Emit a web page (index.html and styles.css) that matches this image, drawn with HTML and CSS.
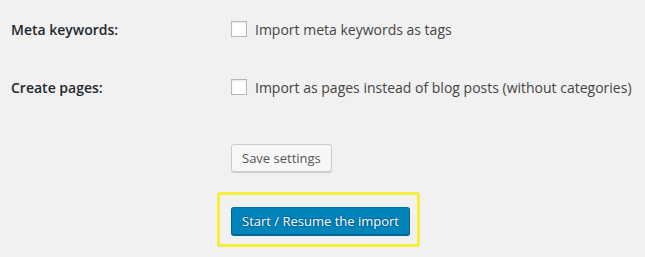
FILE: index.html
```html
<!DOCTYPE html>
<html lang="en">
<head>
  <meta charset="UTF-8">
  <title>Import settings</title>
  <link rel="stylesheet" href="styles.css">
</head>
<body>

<div class="settings">
  <div class="form-row">
    <div class="form-label">Meta keywords:</div>
    <label class="form-option">
      <input type="checkbox">
      <span>Import meta keywords as tags</span>
    </label>
  </div>

  <div class="form-row">
    <div class="form-label">Create pages:</div>
    <label class="form-option">
      <input type="checkbox">
      <span>Import as pages instead of blog posts (without categories)</span>
    </label>
  </div>

  <div class="actions">
    <button class="button">Save settings</button>

    <div class="highlight">
      <button class="button button-primary">Start / Resume the import</button>
    </div>
  </div>
</div>

</body>
</html>
```

FILE: styles.css
```css
/* Estilos gerais */
body {
  margin: 0;
  background-color: #f1f1f1;
  font-family: 'Open Sans', 'Liberation Sans', sans-serif;
  font-size: 14px;
  color: #444;
}

.settings {
  padding-left: 11px;
}

/* Linhas do formulário */
.form-row {
  display: flex;
  align-items: center;
  height: 58px;
}

.form-label {
  width: 220px;
  font-weight: 600;
  color: #23282d;
}

.form-option {
  display: flex;
  align-items: center;
  gap: 8px;
}

.form-option input[type="checkbox"] {
  appearance: none;
  -webkit-appearance: none;
  margin: 0;
  width: 16px;
  height: 16px;
  border: 1px solid #b4b9be;
  background-color: #fff;
  box-shadow: inset 0 1px 2px rgba(0, 0, 0, 0.1);
}

/* Botões */
.actions {
  padding-left: 220px;
  padding-top: 28px;
}

.button {
  display: block;
  height: 28px;
  padding: 0 10px 1px;
  font-family: inherit;
  font-size: 13px;
  line-height: 26px;
  color: #555;
  background-color: #f7f7f7;
  border: 1px solid #ccc;
  border-radius: 3px;
  box-shadow: 0 1px 0 #ccc;
  cursor: pointer;
}

.button-primary {
  color: #fff;
  background-color: #0085ba;
  border-color: #0073aa #006799 #006799;
  box-shadow: 0 1px 0 #006799;
  text-shadow: 0 -1px 1px #006799, 1px 0 1px #006799, 0 1px 1px #006799, -1px 0 1px #006799;
}

/* Destaque amarelo em volta do botão */
.highlight {
  display: inline-block;
  margin-top: 20px;
  margin-left: -14px;
  padding: 12px 7px 9px 11px;
  border: 3px solid #f5ef3b;
  border-radius: 3px;
}
```
